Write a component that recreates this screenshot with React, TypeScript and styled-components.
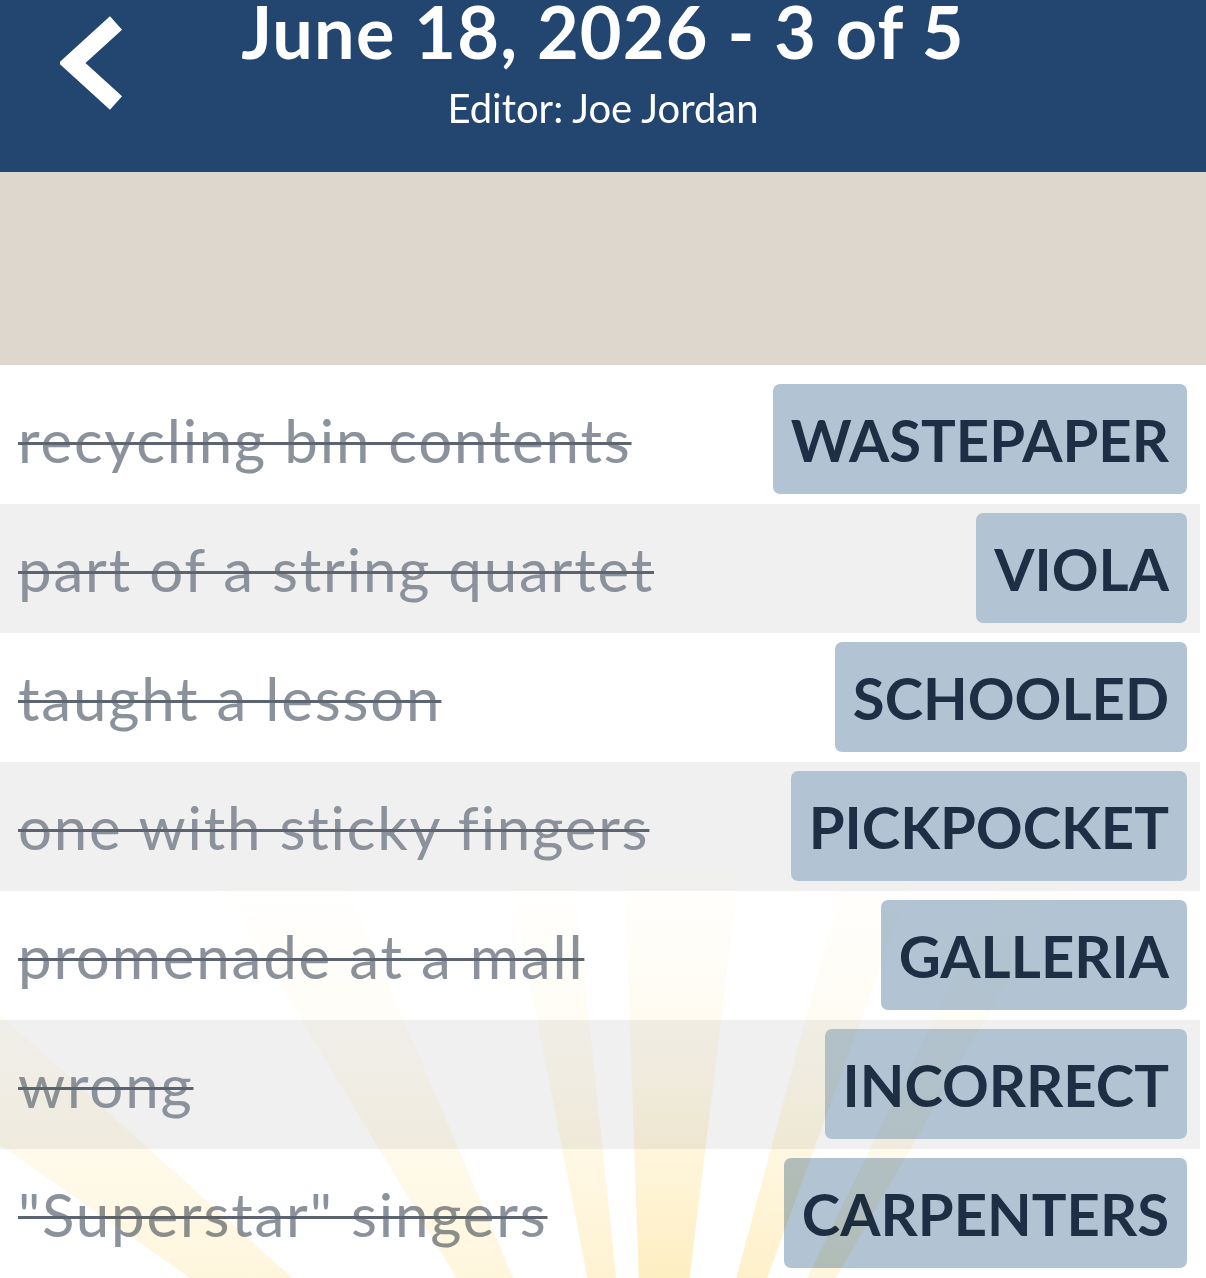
import { createGlobalStyle, styled } from "styled-components";

const GlobalStyle = createGlobalStyle`
  html, body {
    margin: 0;
    padding: 0;
    background: #ffffff;
    font-family: Lato, "Open Sans", sans-serif;
  }
`

const ANSWERS = [
  { clue: "recycling bin contents", word: "WASTEPAPER" },
  { clue: "part of a string quartet", word: "VIOLA" },
  { clue: "taught a lesson", word: "SCHOOLED" },
  { clue: "one with sticky fingers", word: "PICKPOCKET" },
  { clue: "promenade at a mall", word: "GALLERIA" },
  { clue: "wrong", word: "INCORRECT" },
  { clue: "\"Superstar\" singers", word: "CARPENTERS" },
]

// rays of the sunburst: start and end angle (degrees from vertical), strength
const RAYS = [
  [-55, -48, 0.45],
  [-31, -23, 0.45],
  [-11, -6, 0.6],
  [-2, 7, 0.8],
  [15, 20, 0.7],
  [26, 30, 0.45],
]

// burst centre, in list coordinates (below the page)
const CX = 650
const CY = 1235

const rayPoints = (a1: number, a2: number) => {
  const r = 1400
  const p = (a: number) => {
    const rad = (a * Math.PI) / 180
    return `${CX + Math.sin(rad) * r},${CY - Math.cos(rad) * r}`
  }
  return `${CX},${CY} ${p(a1)} ${p(a2)}`
}

const App = () => {
  return (
    <Page>
      <GlobalStyle />
      <Header>
        <BackButton aria-label="Back">
          <svg width="64" height="96" viewBox="0 0 64 96">
            <polyline points="56,8 12,48 56,88" fill="none" stroke="#ffffff" strokeWidth="18" strokeLinejoin="miter" />
          </svg>
        </BackButton>
        <Title>June 18, 2026 - 3 of 5</Title>
        <Subtitle>Editor: Joe Jordan</Subtitle>
      </Header>
      <Band />
      <List>
        {ANSWERS.map((a, i) => (
          <Row key={a.word} $shaded={i % 2 === 1}>
            <Clue>{a.clue}</Clue>
            <Badge>{a.word}</Badge>
          </Row>
        ))}
        <Sunburst viewBox="0 0 1206 913" preserveAspectRatio="none">
          <defs>
            <linearGradient id="fade" gradientUnits="userSpaceOnUse" x1="0" y1="500" x2="0" y2="913">
              <stop offset="0" stopColor="#fbd66a" stopOpacity="0" />
              <stop offset="0.5" stopColor="#fbd66a" stopOpacity="0.16" />
              <stop offset="1" stopColor="#fbd25e" stopOpacity="0.48" />
            </linearGradient>
          </defs>
          {RAYS.map(([a1, a2, o]) => (
            <polygon key={a1} points={rayPoints(a1, a2)} fill="url(#fade)" opacity={o} />
          ))}
        </Sunburst>
      </List>
    </Page>
  )
}

export default App

const Page = styled.div`
  width: 1206px;
  min-height: 1278px;
  background: #ffffff;
  overflow: hidden;
`

const Header = styled.header`
  position: relative;
  height: 172px;
  background-color: #22466f;
  color: #ffffff;
  display: flex;
  flex-direction: column;
  align-items: center;
`

const BackButton = styled.div`
  position: absolute;
  left: 60px;
  top: 15px;
  width: 64px;
  height: 96px;
`

const Title = styled.h1`
  margin: 0;
  font-size: 72px;
  font-weight: 700;
  line-height: 62px;
  letter-spacing: 1.2px;
`

const Subtitle = styled.div`
  margin-top: 22px;
  font-size: 40px;
  font-weight: 400;
  line-height: 48px;
`

const Band = styled.div`
  height: 193px;
  background-color: #ddd7cd;
`

const List = styled.div`
  position: relative;
  width: 1200px;
  padding-top: 10px;
`

const Row = styled.div<{ $shaded: boolean }>`
  display: flex;
  align-items: center;
  justify-content: space-between;
  height: 129px;
  padding: 0 13px 0 18px;
  box-sizing: border-box;
  background-color: ${(p) => (p.$shaded ? "#f0f0f0" : "#ffffff")};
`

const Clue = styled.span`
  font-size: 60px;
  letter-spacing: 1.8px;
  color: #8b929b;
  text-decoration: line-through;
  text-decoration-color: #5b6470;
  text-decoration-thickness: 3px;
  white-space: nowrap;
`

const Badge = styled.span`
  display: flex;
  align-items: center;
  height: 110px;
  padding: 0 18px;
  margin-bottom: 1px;
  box-sizing: border-box;
  border-radius: 7px;
  background-color: #b2c4d4;
  color: #1e2e44;
  font-size: 58px;
  font-weight: 700;
`

const Sunburst = styled.svg`
  position: absolute;
  left: 0;
  top: 0;
  width: 1206px;
  height: 913px;
  pointer-events: none;
  mix-blend-mode: multiply;
`
